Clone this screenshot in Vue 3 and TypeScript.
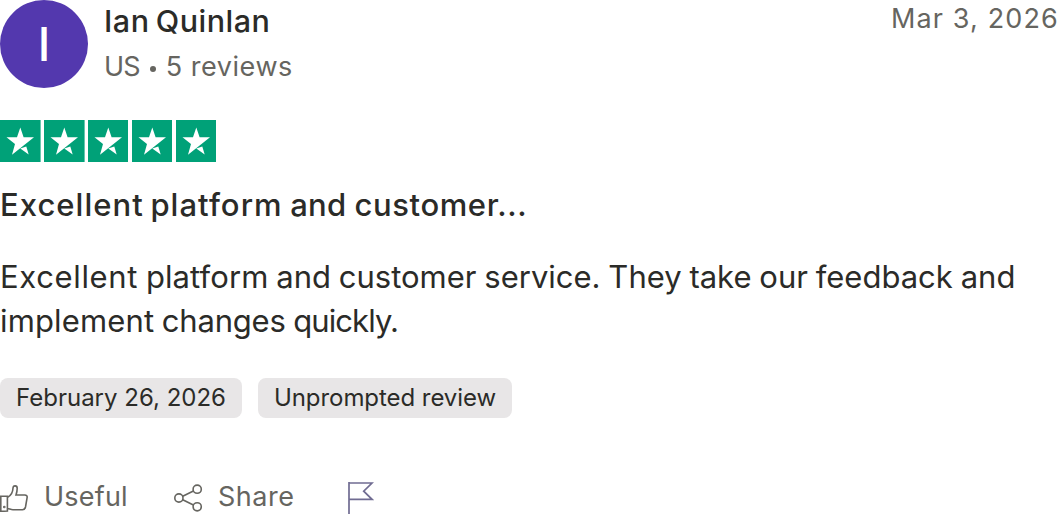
<script setup lang="ts">
const stars: number[] = [1, 2, 3, 4, 5]
</script>

<template>
  <article class="review">
    <header class="head">
      <div class="avatar">
        <svg width="88" height="88" viewBox="0 0 88 88"><circle cx="44" cy="44" r="44" fill="#5338ae" /></svg>
        <span class="initial">I</span>
      </div>
      <div class="who">
        <span class="name">Ian Quinlan</span>
        <span class="meta"><span class="country">US</span><i class="dot" /><span class="count">5 reviews</span></span>
      </div>
      <time class="date">Mar 3, 2026</time>
    </header>

    <div class="stars">
      <svg v-for="s in stars" :key="s" class="star" viewBox="0 0 40.6 42">
        <rect width="40.6" height="42" fill="#00a178" />
        <path d="M20.3 7.4 23.6 17.3H34L12 34.8 15 24 6.5 17.3H17ZM20.3 28.6 26.3 26.6 28.7 34.6Z" fill="#fff" />
      </svg>
    </div>

    <h2 class="title">Excellent platform <span class="tight">and</span> <span class="last">customer...</span></h2>
    <p class="body">
      <span class="line"><span class="wide">Excellent</span> <span class="mid">platform</span> and customer service. They take our feedback and</span>
      <span class="line second"><span class="first">implement</span> changes <span class="narrow">quickly.</span></span>
    </p>

    <div class="tags">
      <span class="tag">February 26, 2026</span>
      <span class="tag unprompted">Unprompted review</span>
    </div>

    <footer class="actions">
      <button class="useful">
        <svg width="28" height="28" viewBox="0 0 28 28" fill="none" stroke="#666560" stroke-width="1.6">
          <path d="M.8 12.2H7.4V27L.8 27.4ZM7.4 13.4C10.5 12 12.8 9 13 4C13.2 1 17.2 1.2 17.2 4.2C17.2 6.8 16.7 8.8 16 11H24.8C26.6 11 27.4 12.2 27.1 13.6L25.5 23C25.1 24.8 24.3 25.7 22.5 25.7H13C10.5 25.7 9.5 24.7 7.4 24.5" />
          <circle cx="4.3" cy="23" r=".5" />
        </svg>
        <span>Useful</span>
      </button>
      <button class="share">
        <svg width="30" height="30" viewBox="0 0 30 30" fill="none" stroke="#666560" stroke-width="1.6">
          <circle cx="5.9" cy="15" r="4.1" /><circle cx="24.2" cy="6.2" r="4.1" /><circle cx="24.2" cy="23.8" r="4.1" />
          <path d="M9.7 13.2 20.4 8M9.7 16.8 20.4 22" />
        </svg>
        <span>Share</span>
      </button>
      <svg class="flag" width="28" height="34" viewBox="0 0 28 34" fill="none" stroke="#706c92" stroke-width="1.7">
        <path d="M3 1V33M3 2H26L17.7 10.2 26 18.3H3" />
      </svg>
    </footer>
  </article>
</template>

<style>
body { background: #fff; }
</style>

<style scoped>
.review { width: 1060px; height: 530px; overflow: hidden; font-family: Inter, "Liberation Sans", sans-serif; color: #2b2b28; white-space: nowrap; }
.head { display: flex; height: 88px; }
.avatar { display: grid; width: 88px; height: 88px; }
.avatar > * { grid-area: 1 / 1; }
.initial { line-height: 88px; text-align: center; color: #fff; font-size: 46px; font-weight: 500; }
.who { margin-left: 16px; padding-top: 1px; display: flex; flex-direction: column; }
.name { font-size: 30.5px; line-height: 40px; font-weight: 500; letter-spacing: .5px; word-spacing: -2.4px; }
.meta { display: flex; align-items: center; margin-top: 12px; height: 28px; line-height: 28px; font-size: 27px; color: #666560; }
.country { letter-spacing: -.9px; }
.count { letter-spacing: .55px; }
.dot { width: 6px; height: 6px; margin: 3px 10px 0 10px; border-radius: 50%; background: #666560; }
.date { margin-left: auto; margin-right: 1px; padding-top: 1px; font-size: 27px; line-height: 36px; letter-spacing: 1.15px; color: #666560; }
.stars { display: flex; justify-content: space-between; width: 216.4px; margin-top: 32px; height: 42px; }
.star { display: block; width: 40.6px; height: 42px; }
.title { margin: 21px 0 0; font-size: 31px; line-height: 44px; font-weight: 550; letter-spacing: 1.05px; word-spacing: -2.8px; }
.tight { letter-spacing: .3px; margin-left: 1px; margin-right: 1.5px; }
.last { letter-spacing: .6px; }
.body { margin: 28px 0 0; font-size: 31px; line-height: 44px; word-spacing: -.9px; }
.line { display: block; }
.wide { letter-spacing: .65px; }
.mid { letter-spacing: .1px; }
.second { letter-spacing: -.2px; word-spacing: -1px; }
.first { letter-spacing: .15px; }
.narrow { letter-spacing: -.9px; }
.tags { display: flex; gap: 16px; margin-top: 35px; height: 40px; }
.tag { padding: 0 16px; border-radius: 8px; background: #e8e6e7; font-size: 24px; line-height: 40px; }
.unprompted { letter-spacing: -.06px; }
.actions { display: flex; align-items: center; height: 40px; margin-top: 59px; color: #666560; }
.actions svg { position: relative; top: 1px; }
button { display: flex; align-items: center; padding: 0; border: 0; background: none; color: inherit; font: inherit; font-size: 27px; line-height: 40px; }
.useful { gap: 16px; width: 173px; letter-spacing: .2px; }
.share { gap: 15px; width: 173px; letter-spacing: .5px; }
</style>
